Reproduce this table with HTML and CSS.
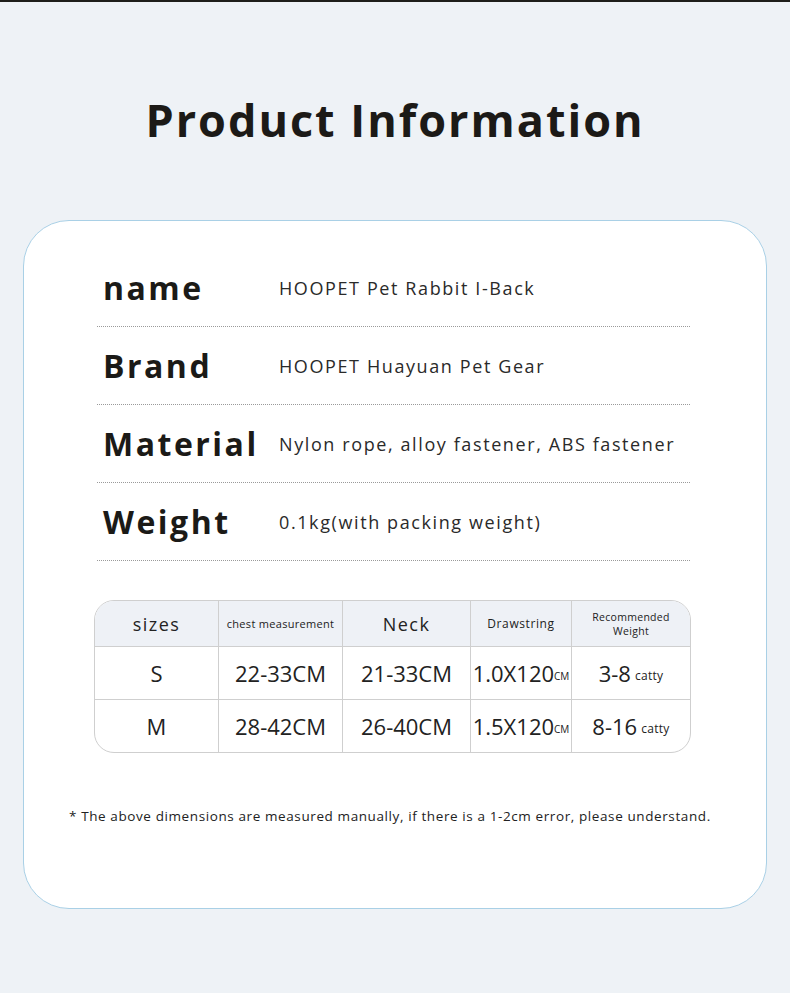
FILE: index.html
```html
<!DOCTYPE html>
<html>
<head>
<meta charset="utf-8">
<link rel="stylesheet" href="styles.css">
</head>
<body>
<div class="topbar"></div>
<h1 class="title">Product Information</h1>
<div class="card">
  <div class="info">
    <div class="row"><div class="label">name</div><div class="value">HOOPET Pet Rabbit I-Back</div></div>
    <div class="row"><div class="label">Brand</div><div class="value">HOOPET Huayuan Pet Gear</div></div>
    <div class="row"><div class="label">Material</div><div class="value">Nylon rope, alloy fastener, ABS fastener</div></div>
    <div class="row"><div class="label">Weight</div><div class="value">0.1kg(with packing weight)</div></div>
  </div>
  <div class="table">
    <div class="cell head c1"><span class="h-big">sizes</span></div>
    <div class="cell head c2"><span class="h-tiny">chest measurement</span></div>
    <div class="cell head c3"><span class="h-big">Neck</span></div>
    <div class="cell head c4"><span class="h-small">Drawstring</span></div>
    <div class="cell head c5"><div class="stack"><span class="h-tiny">Recommended</span><span class="h-tiny">Weight</span></div></div>

    <div class="cell c1"><span class="num">S</span></div>
    <div class="cell c2"><span class="num">22-33CM</span></div>
    <div class="cell c3"><span class="num">21-33CM</span></div>
    <div class="cell c4"><span class="num">1.0X120</span><span class="unit">CM</span></div>
    <div class="cell c5"><span class="num">3-8</span><span class="unit2">catty</span></div>

    <div class="cell last c1"><span class="num">M</span></div>
    <div class="cell last c2"><span class="num">28-42CM</span></div>
    <div class="cell last c3"><span class="num">26-40CM</span></div>
    <div class="cell last c4"><span class="num">1.5X120</span><span class="unit">CM</span></div>
    <div class="cell last c5"><span class="num">8-16</span><span class="unit2">catty</span></div>
  </div>
  <p class="note">* The above dimensions are measured manually, if there is a 1-2cm error, please understand.</p>
</div>
</body>
</html>
```

FILE: styles.css
```css
* { box-sizing: border-box; }
html, body { margin: 0; padding: 0; }
body {
  background: #eef2f6;
  width: 790px;
  height: 993px;
  overflow: hidden;
  font-family: "Open Sans", "Noto Sans", sans-serif;
  color: #1d1d1d;
}
.topbar {
  height: 2px;
  background: #1e1e1a;
}
.title {
  margin: 0;
  padding-top: 87px;
  height: 218px;
  text-align: center;
  font-size: 45px;
  font-weight: 700;
  letter-spacing: 2px;
  line-height: 62px;
  color: #1c1a17;
}
.card {
  margin: 0 23px;
  height: 689px;
  background: #fff;
  border: 1px solid #a9d0e6;
  border-radius: 46px;
  padding: 28px 76px 0 73px;
}
.info { display: flex; flex-direction: column; }
.row {
  height: 78px;
  display: flex;
  align-items: center;
  border-bottom: 1px dotted #9a9a9a;
}
.label {
  width: 182px;
  padding-left: 6px;
  font-size: 32px;
  font-weight: 700;
  letter-spacing: 2.5px;
  color: #1b1a17;
}
.value {
  font-size: 18px;
  letter-spacing: 1.6px;
  color: #2a2a2a;
}
.table {
  margin: 39px 0 0 -3px;
  width: 597px;
  display: grid;
  grid-template-columns: 124px 124px 128px 101px 1fr;
  grid-template-rows: 46px 53px 52px;
  border: 1px solid #cfcfcf;
  border-radius: 20px;
  overflow: hidden;
}
.cell {
  display: flex;
  align-items: center;
  justify-content: center;
  border-right: 1px solid #cfcfcf;
  border-bottom: 1px solid #cfcfcf;
  color: #222;
  text-align: center;
}
.cell.c5 { border-right: none; }
.cell.last { border-bottom: none; }
.head { background: #eef1f6; }
.stack { display: flex; flex-direction: column; align-items: center; }
.stack .h-tiny { display: block; font-size: 10.5px; line-height: 14px; height: 14px; }
.h-big { font-size: 18px; letter-spacing: 1.5px; }
.h-tiny { font-size: 11px; letter-spacing: 0.3px; }
.h-small { font-size: 12px; letter-spacing: 0.6px; }
.num { font-size: 22px; }
.unit { font-size: 10px; align-self: center; margin-top: 6px; }
.unit2 { font-size: 12px; margin-left: 4px; margin-top: 4px; letter-spacing: 0.3px; }
.note {
  margin: 54px 0 0 -28px;
  width: 700px;
  font-size: 13.5px;
  letter-spacing: 0.6px;
  color: #222;
}
```
